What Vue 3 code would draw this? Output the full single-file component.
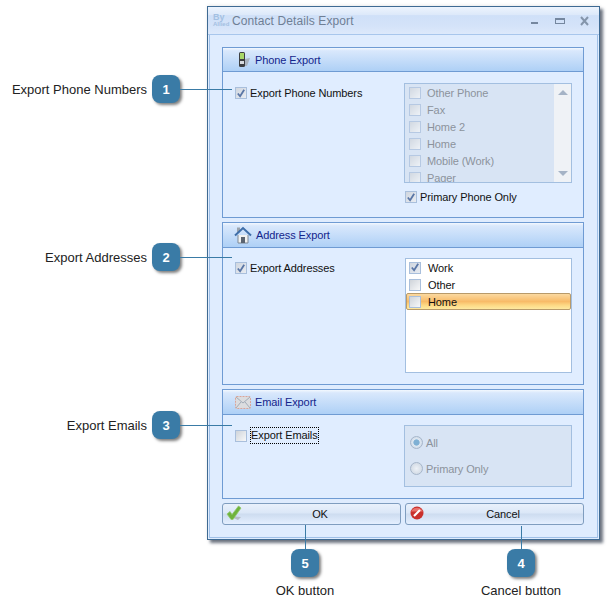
<script setup>
const phoneItems = ['Other Phone', 'Fax', 'Home 2', 'Home', 'Mobile (Work)', 'Pager']
const addressItems = [
  { label: 'Work', checked: true },
  { label: 'Other', checked: false },
  { label: 'Home', checked: false, active: true }
]
const sideNotes = [
  { n: 1, text: 'Export Phone Numbers', y: 75 },
  { n: 2, text: 'Export Addresses', y: 243 },
  { n: 3, text: 'Export Emails', y: 411 }
]
const bottomNotes = [
  { n: 5, text: 'OK button', x: 291, lineTop: 525, lineHeight: 24 },
  { n: 4, text: 'Cancel button', x: 507, lineTop: 526, lineHeight: 23 }
]
</script>

<template>
  <div class="page">
    <div class="window">
      <div class="titlebar">
        <div class="app-logo"><span class="logo-by">By</span><span class="logo-sub">Allied</span></div>
        <span class="title">Contact Details Export</span>
        <div class="win-btns">
          <svg width="66" height="14" viewBox="0 0 66 14">
            <rect x="2" y="8" width="7" height="2" fill="#75879f" />
            <rect x="26.500" y="4.500" width="9" height="5" fill="none" stroke="#75879f" />
            <rect x="26" y="4" width="10" height="2" fill="#75879f" />
            <path d="M52 3l7 8M59 3l-7 8" stroke="#8495ab" stroke-width="2" fill="none" />
          </svg>
        </div>
      </div>

      <div class="content">
        <!-- phone -->
        <section class="panel panel-phone">
          <header class="panel-head">
            <svg class="head-icon" width="14" height="17" viewBox="0 0 14 17">
              <path d="M8 8l5-1-3 8H8z" fill="#aab4c0" />
              <rect x="2" y="1" width="6" height="15" rx="1.500" fill="#3d3f42" />
              <rect x="3" y="2" width="4" height="6" fill="#a8d86a" />
              <rect x="3" y="10" width="4" height="3" fill="#d8dce0" />
            </svg>
            <span>Phone Export</span>
          </header>
          <div class="panel-body">
            <label class="check-row">
              <span class="box on"><svg width="11" height="11" viewBox="0 0 11 11"><path d="M2 5.500l2.500 3L9 1.500" fill="none" stroke="#5a76a6" stroke-width="2" /></svg></span>
              Export Phone Numbers
            </label>
            <div class="side">
              <div class="listbox disabled-list">
                <div class="rows">
                  <div v-for="item in phoneItems" :key="item" class="list-row">
                    <span class="box"></span>{{ item }}
                  </div>
                </div>
                <div class="scrollbar">
                  <span class="arrow up"></span>
                  <span class="arrow down"></span>
                </div>
              </div>
              <label class="check-row primary">
                <span class="box on"><svg width="11" height="11" viewBox="0 0 11 11"><path d="M2 5.500l2.500 3L9 1.500" fill="none" stroke="#5a76a6" stroke-width="2" /></svg></span>
                Primary Phone Only
              </label>
            </div>
          </div>
        </section>

        <!-- address -->
        <section class="panel panel-address">
          <header class="panel-head">
            <svg class="head-icon house" width="18" height="18" viewBox="0 0 18 18">
              <path d="M4 9v8h10V9" fill="#f2f2f0" stroke="#7d8794" />
              <rect x="7" y="11" width="4" height="6" fill="#5b6470" />
              <rect x="3" y="1.500" width="3" height="5" fill="#9aa3ad" />
              <path d="M1 9.500L9 2l8 7.500" fill="none" stroke="#3f6ea8" stroke-width="2" />
            </svg>
            <span>Address Export</span>
          </header>
          <div class="panel-body">
            <label class="check-row">
              <span class="box on"><svg width="11" height="11" viewBox="0 0 11 11"><path d="M2 5.500l2.500 3L9 1.500" fill="none" stroke="#5a76a6" stroke-width="2" /></svg></span>
              Export Addresses
            </label>
            <div class="side">
              <div class="listbox address-list">
                <div
                  v-for="item in addressItems"
                  :key="item.label"
                  class="list-row"
                  :class="{ active: item.active }"
                >
                  <span class="box" :class="{ on: item.checked }">
                    <svg v-if="item.checked" width="11" height="11" viewBox="0 0 11 11"><path d="M2 5.500l2.500 3L9 1.500" fill="none" stroke="#5a76a6" stroke-width="2" /></svg>
                  </span>{{ item.label }}
                </div>
              </div>
            </div>
          </div>
        </section>

        <!-- email -->
        <section class="panel panel-email">
          <header class="panel-head">
            <svg class="head-icon envelope" width="16" height="13" viewBox="0 0 16 13">
              <rect x="0.500" y="0.500" width="15" height="12" rx="1" fill="#dbdcdf" stroke="#dba497" stroke-dasharray="2 1" />
              <path d="M1 1l7 6 7-6M1 12l5-6M15 12l-5-6" fill="none" stroke="#a2acb8" />
            </svg>
            <span>Email Export</span>
          </header>
          <div class="panel-body">
            <label class="check-row email-check">
              <span class="box"></span>
              <span class="focus">Export Emails</span>
            </label>
            <div class="side">
              <div class="radio-group">
                <div class="radio-row"><span class="radio on"></span>All</div>
                <div class="radio-row"><span class="radio"></span>Primary Only</div>
              </div>
            </div>
          </div>
        </section>

        <div class="actions">
          <button class="btn">
            <svg class="btn-icon ok-icon" width="17" height="17" viewBox="0 0 17 17">
              <path d="M3 11l9 4 3-3z" fill="#b4bcc6" />
              <path d="M1 9l3-2.500 2 3L12.500 1 15 3 7 14.500H5z" fill="#6fb33c" stroke="#94c96c" stroke-width="0.800" />
            </svg>
            OK
          </button>
          <button class="btn">
            <svg class="btn-icon" width="14" height="14" viewBox="0 0 14 14">
              <circle cx="7" cy="7" r="6.500" fill="#c9302c" />
              <path d="M1 5.500a6.500 6 0 0 1 12 0z" fill="#e8706a" />
              <path d="M4 10l6-6" stroke="#fff" stroke-width="2.200" />
            </svg>
            Cancel
          </button>
        </div>
      </div>
    </div>

    <!-- callouts -->
    <div v-for="note in sideNotes" :key="note.n" class="side-note" :style="{ top: note.y + 'px' }">
      <span class="note-text">{{ note.text }}</span>
      <span class="badge">{{ note.n }}</span>
      <span class="line-h"></span>
    </div>
    <template v-for="note in bottomNotes" :key="note.n">
      <span class="line-v" :style="{ left: note.x + 14 + 'px', top: note.lineTop + 'px', height: note.lineHeight + 'px' }"></span>
      <div class="bottom-note" :style="{ left: note.x - 46 + 'px' }">
        <span class="badge">{{ note.n }}</span>
        <span class="note-text">{{ note.text }}</span>
      </div>
    </template>
  </div>
</template>

<style scoped>
.page {
  position: relative;
  width: 608px;
  height: 614px;
  overflow: hidden;
  background: #fff;
  font-family: "Liberation Sans", Arial, sans-serif;
  font-size: 11px;
  letter-spacing: -0.1px;
  color: #111;
}

.window {
  box-sizing: border-box;
  width: 393px;
  height: 534px;
  margin: 6px 0 0 207px;
  display: flex;
  flex-direction: column;
  background: #dfecfe;
  border: 1px solid #3e6a93;
  box-shadow: 3px 3px 3px rgba(60, 70, 85, 0.75), 0 -1px 3px rgba(0, 0, 0, 0.08);
}

.titlebar {
  height: 28px;
  flex-shrink: 0;
  display: flex;
  align-items: center;
  padding: 0 5px;
  box-sizing: border-box;
  background: linear-gradient(#edf4fd 0, #dde9fa 28%, #cfe0f8 32%, #d4e3f9 70%, #dde9fb 100%);
  border-bottom: 1px solid #a8c6ec;
}

.app-logo {
  width: 19px;
  display: flex;
  flex-direction: column;
  line-height: 7px;
  letter-spacing: 0;
  color: #a3c0e2;
  font-weight: bold;
}

.logo-by {
  font-size: 9px;
}

.logo-sub {
  font-size: 6px;
}

.title {
  font-size: 12px;
  letter-spacing: 0.1px;
  color: #6f7f95;
}

.win-btns {
  margin-left: auto;
  margin-right: -1px;
  display: flex;
}

.content {
  flex: 1;
  margin: 0 1px 1px;
  border: solid #9fc0e8;
  border-width: 0 1px 1px;
  padding: 12px 13px 0 12px;
  display: flex;
  flex-direction: column;
  gap: 4px;
}

.panel {
  box-sizing: border-box;
  border: 1px solid #6f9bd3;
  background: #e0edff;
  display: flex;
  flex-direction: column;
}

.panel-phone {
  height: 171px;
}

.panel-address {
  height: 163px;
}

.panel-email {
  height: 110px;
}

.panel-head {
  box-sizing: border-box;
  height: 24px;
  flex-shrink: 0;
  display: flex;
  align-items: center;
  padding-left: 14px;
  gap: 4px;
  color: #14258c;
  background: linear-gradient(#f3f8fe 0, #d9e8fc 12%, #aed0f6 100%);
  border-bottom: 1px solid #6f9bd3;
}

.panel-address .panel-head,
.panel-email .panel-head {
  height: 25px;
}

.head-icon {
  flex-shrink: 0;
}

.house {
  margin-left: -3px;
}

.envelope {
  margin-left: -2px;
}

.panel-body {
  flex: 1;
  display: flex;
  padding: 11px 11px 0 12px;
  min-height: 0;
}

.panel-address .panel-body,
.panel-email .panel-body {
  padding-top: 10px;
}

.check-row {
  display: flex;
  align-items: flex-start;
  gap: 3px;
  height: 17px;
  line-height: 15px;
  margin-top: 3px;
  white-space: nowrap;
}

.side {
  margin-left: auto;
  width: 168px;
  flex-shrink: 0;
}

.box {
  box-sizing: border-box;
  flex-shrink: 0;
  width: 12px;
  height: 12px;
  margin-top: 1px;
  border: 1px solid #a9bfdc;
  background: linear-gradient(135deg, #cfd4da, #f7f8f9);
  display: inline-flex;
  align-items: center;
  justify-content: center;
}

.box.on {
  background: linear-gradient(135deg, #d0d6df, #e8ecf2);
}

.box svg {
  display: block;
}

.listbox {
  box-sizing: border-box;
  border: 1px solid #a3bfe0;
  overflow: hidden;
}

.disabled-list {
  height: 100px;
  display: flex;
  background: #d8e4f4;
  color: #8c939c;
}

.disabled-list .box {
  opacity: 0.7;
}

.rows {
  flex: 1;
  overflow: hidden;
}

.list-row {
  height: 17px;
  display: flex;
  align-items: center;
  gap: 6px;
  padding-left: 4px;
  white-space: nowrap;
}

.list-row .box {
  margin-top: 0;
}

.scrollbar {
  position: relative;
  width: 17px;
  background: #eff2f6;
}

.arrow {
  position: absolute;
  left: 4px;
  width: 0;
  height: 0;
  border-left: 5px solid transparent;
  border-right: 5px solid transparent;
}

.arrow.up {
  top: 6px;
  border-bottom: 5px solid #a5b3c6;
}

.arrow.down {
  bottom: 6px;
  border-top: 5px solid #a5b3c6;
}

.primary {
  margin: 7px 0 0 1px;
}

.address-list {
  height: 115px;
  margin-left: 1px;
  width: 167px;
  background: #fff;
}

.address-list .list-row {
  padding-left: 3px;
  gap: 7px;
}

.list-row.active {
  box-sizing: border-box;
  height: 17px;
  padding-left: 2px;
  border: 1px solid #b89a6a;
  border-radius: 2px;
  background: linear-gradient(#fbd9a0 0, #f8bb68 50%, #fdd985 75%, #fee9a0 100%);
}

.address-list .list-row.active {
  padding-left: 2px;
}

.email-check {
  margin-top: 4px;
  gap: 3px;
}

.focus {
  outline: 1px dotted #000;
  outline-offset: -1px;
  height: 17px;
  line-height: 16px;
  padding: 0 1px;
  margin-top: -2px;
}

.radio-group {
  box-sizing: border-box;
  height: 62px;
  border: 1px solid #a3bfe0;
  background: #d8e4f4;
  color: #8c939c;
  padding: 8px 0 0 5px;
  display: flex;
  flex-direction: column;
  gap: 9px;
}

.radio-row {
  height: 17px;
  display: flex;
  align-items: center;
  gap: 3px;
}

.radio {
  box-sizing: border-box;
  width: 13px;
  height: 13px;
  border-radius: 50%;
  border: 1px solid #a6b6ca;
  background: radial-gradient(circle, #eef2f7 0, #c9d3df 100%);
}

.radio.on {
  background: radial-gradient(circle, #7fb0d4 0, #7fb0d4 35%, #dfe8f2 45%, #c2cfdf 100%);
}

.actions {
  display: flex;
  gap: 4px;
}

.btn {
  position: relative;
  flex: 1;
  height: 22px;
  padding: 0 0 0 17px;
  font: inherit;
  letter-spacing: inherit;
  color: #111;
  border: 1px solid #7f9dbf;
  border-radius: 3px;
  background: linear-gradient(#e9f1fc 0, #dbe7f7 45%, #cddcf0 50%, #e4efff 100%);
}

.btn-icon {
  position: absolute;
  left: 4px;
  top: 2px;
}

.ok-icon {
  top: 1px;
  left: 3px;
}

.side-note {
  position: absolute;
  left: 0;
  width: 232px;
  height: 28px;
  display: flex;
  align-items: center;
}

.side-note .note-text {
  width: 147px;
  margin-right: 5px;
  text-align: right;
}

.note-text {
  font-size: 13px;
  letter-spacing: 0;
  color: #222;
  white-space: nowrap;
}

.badge {
  flex-shrink: 0;
  width: 28px;
  height: 28px;
  border-radius: 8px;
  background: #3a7ba6;
  color: #fff;
  font-weight: bold;
  font-size: 13px;
  letter-spacing: 0;
  display: flex;
  align-items: center;
  justify-content: center;
  box-shadow: 2px 2px 3px rgba(0, 0, 0, 0.5);
}

.line-h {
  flex: 1;
  height: 1px;
  background: #3a7ba6;
}

.line-v {
  position: absolute;
  width: 1px;
  background: #3a7ba6;
}

.bottom-note {
  position: absolute;
  top: 549px;
  width: 120px;
  display: flex;
  flex-direction: column;
  align-items: center;
  gap: 6px;
}
</style>

<style>
html,
body {
  margin: 0;
  background: #fff;
}
</style>
